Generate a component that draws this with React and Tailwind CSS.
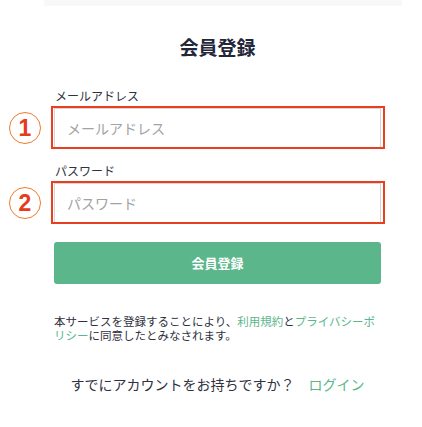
import React from "react";

const font = { fontFamily: '"Noto Sans CJK JP", "Noto Sans", sans-serif' };

function Marker({ n }) {
  return (
    <div className="absolute left-[-45px] top-1/2 -translate-y-1/2 w-[32px] h-[32px] rounded-full border-[1.5px] border-[#f07a2e] flex items-center justify-center">
      <span
        className="text-[23px] font-bold text-[#e63b1c] leading-none"
        style={{ fontFamily: '"Liberation Sans", Arial, sans-serif' }}
      >
        {n}
      </span>
    </div>
  );
}

function Field({ label, placeholder, n, type = "text" }) {
  return (
    <div className="flex flex-col">
      <label className="text-[12px] leading-[16px] text-[#2f3140] mb-[4px] pl-[1px]">
        {label}
      </label>
      <div className="relative">
        <input
          type={type}
          placeholder={placeholder}
          className="w-full h-[40px] border border-[#d6d6d6] bg-white px-[12px] text-[14px] text-[#333] placeholder:text-[#a3a3a3] outline-none"
          style={font}
        />
        <div className="absolute left-[-3px] right-[-4px] top-[-2px] bottom-[-1px] border-2 border-[#e8401f] pointer-events-none" />
        <Marker n={n} />
      </div>
    </div>
  );
}

export default function App() {
  return (
    <div className="w-[422px] h-[427px] bg-white overflow-hidden" style={font}>
      <div className="ml-[44px] w-[358px] h-[6px] bg-[#f8f8f8]" />
      <div className="ml-[54px] w-[327px] flex flex-col">
        <h1 className="mt-[27px] text-center text-[19px] leading-[28px] font-bold text-[#222638]">
          会員登録
        </h1>
        <div className="mt-[27px]">
          <Field label="メールアドレス" placeholder="メールアドレス" n="1" />
        </div>
        <div className="mt-[15px]">
          <Field label="パスワード" placeholder="パスワード" n="2" type="password" />
        </div>
        <button className="mt-[19px] h-[42px] rounded-[3px] bg-[#5bb78b] text-white text-[13px] font-bold">
          会員登録
        </button>
        <p className="mt-[30px] text-[11.5px] leading-[14px] text-[#2f3140]">
          本サービスを登録することにより、
          <span className="text-[#5bb78b]">利用規約</span>と
          <span className="text-[#5bb78b]">プライバシーポリシー</span>
          に同意したとみなされます。
        </p>
        <p className="mt-[32px] text-center text-[14px] leading-[20px] text-[#2f3140]">
          すでにアカウントをお持ちですか？
          <a className="ml-[14px] text-[#5bb78b]" href="#">
            ログイン
          </a>
        </p>
      </div>
    </div>
  );
}
